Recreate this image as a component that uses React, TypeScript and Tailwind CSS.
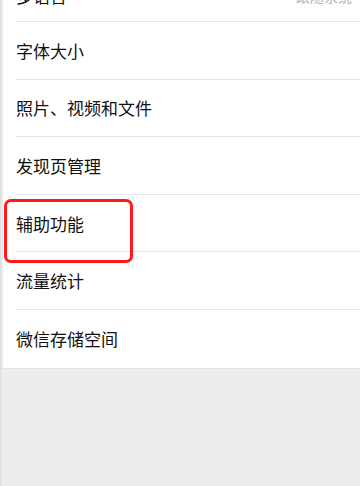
import React from "react";

const rows = ["字体大小", "照片、视频和文件", "发现页管理", "辅助功能", "流量统计", "微信存储空间"];

export default function App() {
  return (
    <div
      className="relative h-[486px] w-[360px] overflow-hidden bg-[#ededed]"
      style={{ fontFamily: '"Noto Sans CJK SC", "Noto Sans", sans-serif' }}
    >
      <div className="flex h-full">
        <div className="w-[3px] shrink-0 bg-gradient-to-r from-[#dcdcdc] to-[#f0f0f0]" />
        <div className="flex-1">
          <div className="mt-[-35.6px] bg-white pl-[13px]">
            <div className="flex h-[57.6px] items-center justify-between border-b border-[#e6e6e6] pt-[7px]">
              <span className="text-[17px] text-[#111111]">多语言</span>
              <span className="pr-[8px] text-[14px] text-[#b2b2b2]">跟随系统</span>
            </div>
            {rows.map((r, i) => (
              <div
                key={r}
                className={`flex h-[57.6px] items-center ${i < rows.length - 1 ? "border-b border-[#e6e6e6]" : ""}`}
              >
                <span className="text-[17px] leading-none text-[#111111]">{r}</span>
              </div>
            ))}
          </div>
          <div className="h-px bg-[#e2e2e2]" />
        </div>
      </div>
      <div className="absolute left-[3.5px] top-[198.5px] h-[64px] w-[129px] rounded-[7px] border-[3.5px] border-[#ff1a1a]" />
    </div>
  );
}
